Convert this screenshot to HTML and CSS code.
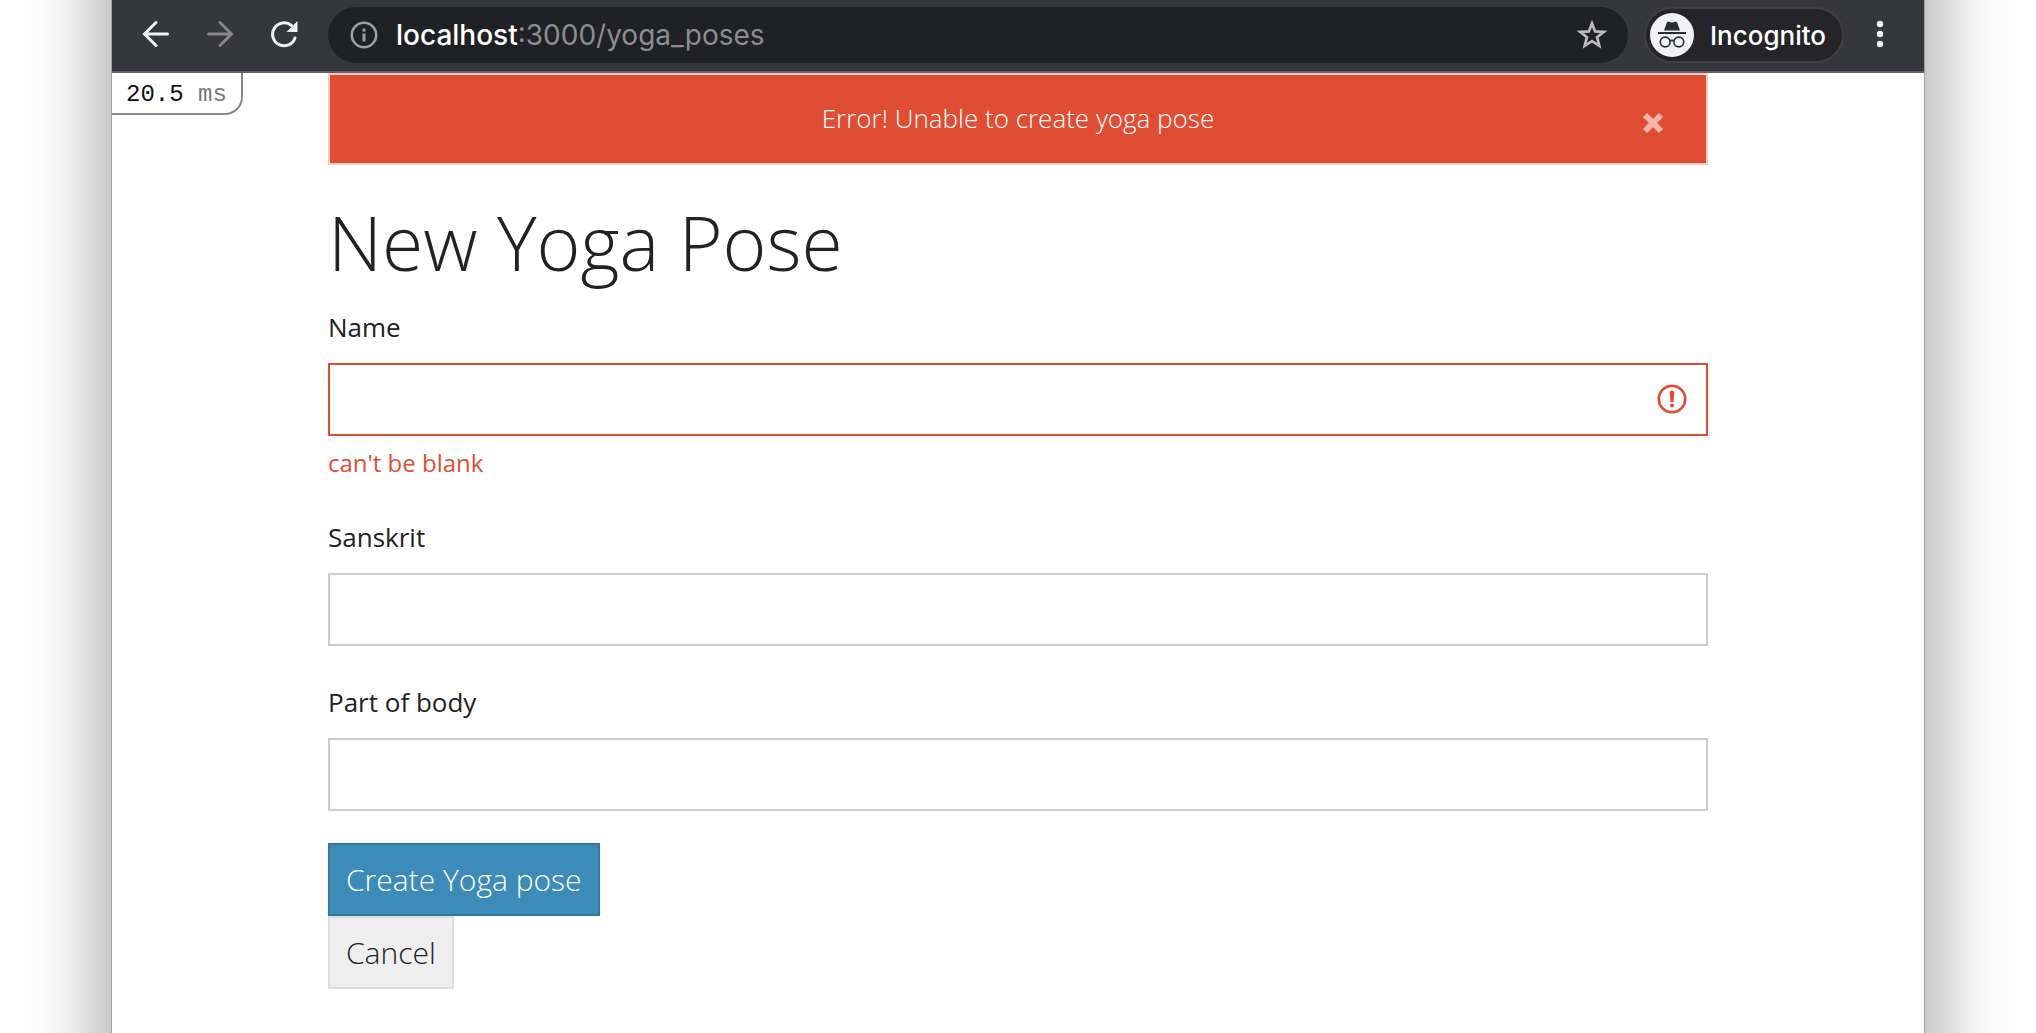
FILE: index.html
```html
<!DOCTYPE html>
<html lang="en">
<head>
<meta charset="utf-8">
<title>New Yoga Pose</title>
<link rel="stylesheet" href="styles.css">
</head>
<body>
<div class="window">
  <header class="toolbar">
    <nav class="nav-buttons">
      <button type="button" class="icon-button" aria-label="Back">
        <svg width="28" height="28" viewBox="0 0 28 28" fill="none" stroke="#f1f2f4" stroke-width="3" stroke-linecap="round"><path d="M25.500 14H3.500M14 2.500L2.500 14L14 25.500"/></svg>
      </button>
      <button type="button" class="icon-button" aria-label="Forward" disabled>
        <svg width="28" height="28" viewBox="0 0 28 28" fill="none" stroke="#868686" stroke-width="3" stroke-linecap="round"><path d="M2.500 14H24.500M14 2.500L25.500 14L14 25.500"/></svg>
      </button>
      <button type="button" class="icon-button" aria-label="Reload">
        <svg width="28" height="28" viewBox="0 0 28 28"><path d="M21.500 5.500A11.500 11.500 0 1 0 25 18" fill="none" stroke="#f1f2f4" stroke-width="3" stroke-linecap="round"/><path d="M27.500 1V12H16.500Z" fill="#f1f2f4"/></svg>
      </button>
    </nav>
    <div class="address-bar">
      <svg width="28" height="28" viewBox="0 0 28 28" aria-hidden="true"><circle cx="14" cy="14" r="12.200" fill="none" stroke="#9aa0a6" stroke-width="2.600"/><path d="M12.500 7.500h3v3h-3zM12.500 12.500h3v8h-3z" fill="#9aa0a6"/></svg>
      <span class="url"><span class="url-host">localhost</span>:3000/yoga_poses</span>
      <button type="button" class="icon-button" aria-label="Bookmark">
        <svg width="32" height="32" viewBox="0 0 32 32" fill="none" stroke="#bdbdbd" stroke-width="2.700"><path d="M16 4.500L19.100 12.400L27.800 12.900L21.100 18.300L23.300 26.800L16 22.100L8.700 26.800L10.900 18.300L4.200 12.900L12.900 12.400Z"/></svg>
      </button>
    </div>
    <div class="incognito">
      <svg width="44" height="44" viewBox="0 0 44 44" aria-hidden="true"><circle cx="22" cy="22" r="22" fill="#f1f2f6"/><path d="M14 17.500L17 9.300Q17.500 8.300 18.600 8.700Q22 10.200 25.400 8.700Q26.500 8.300 27 9.300L30 17.500Z" fill="#2b2c30"/><path d="M8 20H36" stroke="#2b2c30" stroke-width="2"/><g fill="none" stroke="#2b2c30" stroke-width="1.700"><circle cx="15.200" cy="29" r="4.900"/><circle cx="28.800" cy="29" r="4.900"/><path d="M20 28Q22 26.800 24 28"/></g></svg>
      <span>Incognito</span>
    </div>
    <button type="button" class="icon-button" aria-label="Menu">
      <svg width="8" height="28" viewBox="0 0 8 28" fill="#f1f2f4"><circle cx="4" cy="4" r="3.200"/><circle cx="4" cy="14" r="3.200"/><circle cx="4" cy="24" r="3.200"/></svg>
    </button>
  </header>
  <div class="page">
    <div class="profiler">20.5 <span class="profiler-unit">ms</span></div>
    <main class="content">
      <div class="alert" role="alert">
        <p class="alert-text">Error! Unable to create yoga pose</p>
        <button type="button" class="alert-close" aria-label="Close">
          <svg width="22" height="22" viewBox="0 0 22 22"><path d="M3 3L19 19M19 3L3 19" stroke="#f3b5a9" stroke-width="6"/></svg>
        </button>
      </div>
      <h1 class="title">New Yoga Pose</h1>
      <form class="form">
        <div class="field">
          <label for="name">Name</label>
          <div class="control">
            <input class="input input-error" type="text" id="name" aria-describedby="name-error" aria-invalid="true">
            <svg class="error-icon" width="30" height="30" viewBox="0 0 30 30" aria-hidden="true"><circle cx="15" cy="15" r="13.200" fill="none" stroke="#df4e34" stroke-width="2.700"/><path d="M12.700 8.500Q12.700 6.600 15 6.600Q17.300 6.600 17.300 8.500L16.600 17Q16.500 18.200 15 18.200Q13.500 18.200 13.400 17Z" fill="#df4e34"/><circle cx="15" cy="21.500" r="2" fill="#df4e34"/></svg>
          </div>
          <p class="error-text" id="name-error">can't be blank</p>
        </div>
        <div class="field">
          <label for="sanskrit">Sanskrit</label>
          <input class="input" type="text" id="sanskrit">
        </div>
        <div class="field">
          <label for="body-part">Part of body</label>
          <input class="input" type="text" id="body-part">
        </div>
        <div class="actions">
          <button type="submit" class="button button-primary">Create Yoga pose</button>
          <a href="#" class="button">Cancel</a>
        </div>
      </form>
    </main>
  </div>
</div>
</body>
</html>
```
FILE: styles.css
```css
*, *::before, *::after { box-sizing: border-box; }

body {
  margin: 0;
  padding: 0 111px;
  min-height: 100vh;
  display: flex;
  color: #222;
  font-family: "Open Sans", "Noto Sans", sans-serif;
  background:
    linear-gradient(to left, #cacaca, #d6d6d6 16px, #e3e3e3 30px, #f1f1f1 46px, #fafafa 68px, #fff 96px) left / 111px 100% no-repeat,
    linear-gradient(to right, #cacaca, #d6d6d6 16px, #e3e3e3 30px, #f1f1f1 46px, #fafafa 68px, #fff 96px) right / 111px 100% no-repeat,
    #fff;
}

h1, p { margin: 0; }

.window {
  flex: 1;
  min-width: 0;
  background: #fff;
  border: solid #a0a0a0;
  border-width: 0 1px;
}

/* Browser toolbar */
.toolbar {
  display: flex;
  align-items: center;
  height: 73px;
  padding: 0 40px 3px 30px;
  background: #36373b;
  border-bottom: 2px solid #606165;
  font-family: Inter, Roboto, sans-serif;
}

.nav-buttons {
  display: flex;
  gap: 36px;
  margin-right: 30px;
}

.icon-button {
  display: flex;
  padding: 0;
  border: 0;
  background: none;
}

.address-bar {
  flex: 1;
  display: flex;
  align-items: center;
  height: 56px;
  margin-top: 2px;
  padding: 0 20px 0 22px;
  border-radius: 28px;
  background: #202124;
}

.url {
  flex: 1;
  padding-left: 18px;
  color: #8c8d8f;
  font-size: 28px;
}

.url-host {
  color: #fff;
  font-weight: 500;
}

.incognito {
  display: flex;
  align-items: center;
  gap: 16px;
  height: 56px;
  margin: 2px 32px 0 16px;
  padding: 0 16px 0 4px;
  border: 2px solid #403f45;
  border-radius: 28px;
  background: #252529;
  color: #fff;
  font-size: 26px;
  font-weight: 500;
}

/* Page */
.page { position: relative; }

.profiler {
  position: absolute;
  top: 0;
  left: 0;
  height: 42px;
  padding: 0 14px;
  border: solid #888;
  border-width: 0 2px 2px 0;
  border-radius: 0 0 18px 0;
  color: #111;
  font: 24px/44px "Liberation Mono", monospace;
}

.profiler-unit { color: #777; }

.content { padding: 0 216px 44px; }

.alert {
  display: flex;
  align-items: center;
  height: 92px;
  padding: 0 42px;
  border: 2px solid #f7c9c0;
  background: #df4e34;
  color: #fff;
}

.alert-text {
  flex: 1;
  padding: 0 0 2px 22px;
  text-align: center;
  font-size: 26px;
  font-weight: 300;
}

.alert-close {
  display: flex;
  padding: 8px 0 0;
  border: 0;
  background: none;
}

.title {
  padding: 24px 0 12px;
  font-size: 75px;
  font-weight: 300;
  line-height: 106px;
}

.field + .field { margin-top: 36px; }

.field label {
  display: block;
  padding-bottom: 16px;
  font-size: 26px;
  line-height: 40px;
}

.control { position: relative; }

.input {
  display: block;
  width: 100%;
  height: 73px;
  padding: 0 16px;
  border: 2px solid #ccc;
  border-radius: 0;
  background: #fff;
  font: inherit;
  font-size: 26px;
}

.input-error { border-color: #df4e34; }

.error-icon {
  position: absolute;
  top: 21px;
  right: 21px;
}

.error-text {
  padding-top: 8px;
  color: #df4e34;
  font-size: 24px;
  line-height: 37px;
}

.actions {
  display: flex;
  flex-direction: column;
  align-items: flex-start;
  margin-top: 32px;
}

.button {
  height: 73px;
  padding: 0 16px;
  border: 2px solid #ddd;
  border-radius: 0;
  background: #eee;
  color: #222;
  font: 300 30px/69px "Open Sans", "Noto Sans", sans-serif;
  text-decoration: none;
}

.button-primary {
  border-color: #2f7aa3;
  background: #3c8bb8;
  color: #fff;
}
```
